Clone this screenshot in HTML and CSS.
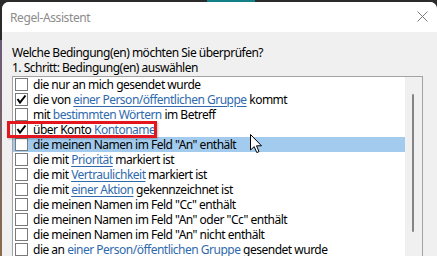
FILE: index.html
```html
<!DOCTYPE html>
<html lang="de">
<head>
<meta charset="utf-8">
<link rel="stylesheet" href="styles.css">
</head>
<body>
<div class="screen">
  <div class="desk-strip"><span class="teal"></span></div>
  <div class="window">
    <div class="titlebar">
      <span class="title">Regel-Assistent</span>
      <svg class="close" width="11" height="11" viewBox="0 0 11 11"><path d="M0.5 0.5 L10.5 10.5 M10.5 0.5 L0.5 10.5" stroke="#7a7a7a" stroke-width="1" fill="none"/></svg>
    </div>
    <div class="content">
      <p class="line">Welche Bedingung(en) möchten Sie überprüfen?</p>
      <p class="line">1. Schritt: Bedingung(en) auswählen</p>
      <div class="listbox">
        <ul class="items">
          <li class="item"><span class="cb"></span><span>die nur an mich gesendet wurde</span></li>
          <li class="item"><span class="cb"><svg width="11" height="11" viewBox="0 0 11 11"><path d="M1.5 5 L4 8.5 L9.5 1.5" stroke="#000" stroke-width="2" fill="none"/></svg></span><span>die von <a class="lnk">einer Person/öffentlichen Gruppe</a> kommt</span></li>
          <li class="item"><span class="cb"></span><span>mit <a class="lnk plain">bestimmten Wörtern</a> im Betreff</span></li>
          <li class="item"><span class="cb"><svg width="11" height="11" viewBox="0 0 11 11"><path d="M1.5 5 L4 8.5 L9.5 1.5" stroke="#000" stroke-width="2" fill="none"/></svg></span><span>über Konto <a class="lnk">Kontoname</a></span></li>
          <li class="item selected"><span class="cb"></span><span>die meinen Namen im Feld "An" enthält</span></li>
          <li class="item"><span class="cb"></span><span>die mit <a class="lnk">Priorität</a> markiert ist</span></li>
          <li class="item"><span class="cb"></span><span>die mit <a class="lnk">Vertraulichkeit</a> markiert ist</span></li>
          <li class="item"><span class="cb"></span><span>die mit <a class="lnk">einer Aktion</a> gekennzeichnet ist</span></li>
          <li class="item"><span class="cb"></span><span>die meinen Namen im Feld "Cc" enthält</span></li>
          <li class="item"><span class="cb"></span><span>die meinen Namen im Feld "An" oder "Cc" enthält</span></li>
          <li class="item"><span class="cb"></span><span>die meinen Namen im Feld "An" nicht enthält</span></li>
          <li class="item"><span class="cb"></span><span>die an <a class="lnk">einer Person/öffentlichen Gruppe</a> gesendet wurde</span></li>
        </ul>
        <div class="scrollbar"><span class="thumb"></span></div>
      </div>
    </div>
  </div>
  <div class="highlight-box"></div>
  <svg class="cursor" width="13" height="20" viewBox="0 0 13 20"><path d="M0.5 0.5 L0.5 16 L4.2 12.6 L6.8 18.6 L9 17.6 L6.5 11.8 L11.5 11.8 Z" fill="#fff" stroke="#000" stroke-width="1" stroke-linejoin="miter"/></svg>
</div>
</body>
</html>
```
FILE: styles.css
```css
* { box-sizing: border-box; }
html, body { margin: 0; padding: 0; }
body {
  width: 437px;
  height: 256px;
  overflow: hidden;
  background: #262626;
  font-family: "Noto Sans", "Open Sans", sans-serif;
}
.screen {
  position: relative;
  width: 437px;
  height: 256px;
  background: linear-gradient(to bottom, #2a2a2a 0, #2a2a2a 40px, #6b5a7a 40px, #8a6a4a 256px);
}
.desk-strip {
  height: 2px;
  position: relative;
  background: #2b2b2b;
}
.teal {
  position: absolute;
  left: 207px;
  width: 48px;
  top: 0;
  height: 2px;
  background: #137f86;
}
.window {
  margin-left: 2px;
  height: 254px;
  border-radius: 7px 7px 0 0;
  overflow: hidden;
  background: #f0f0f0;
  display: flex;
  flex-direction: column;
}
.titlebar {
  height: 30px;
  flex: none;
  background: #ffffff;
  display: flex;
  align-items: center;
  justify-content: space-between;
  padding: 0 9px 0 8px;
}
.title {
  font-size: 12px;
  color: #8c8c8c;
  letter-spacing: -0.4px;
}
.close { display: block; margin-top: -1px; }
.content {
  flex: 1;
  padding: 13px 0 0 10px;
  display: flex;
  flex-direction: column;
  min-height: 0;
}
.line {
  margin: 0;
  font-size: 12px;
  line-height: 15px;
  color: #000;
  letter-spacing: -0.5px;
}
.listbox {
  margin-top: 1px;
  width: 411px;
  flex: 1;
  border: 1px solid #a3a3a3;
  border-bottom: none;
  background: #fff;
  display: flex;
  min-height: 0;
}
.items {
  list-style: none;
  margin: 0;
  padding: 0;
  flex: 1;
}
.item {
  height: 15px;
  line-height: 15px;
  display: flex;
  align-items: center;
  font-size: 12px;
  color: #000;
  white-space: nowrap;
  letter-spacing: -0.5px;
}
.item.selected { background: #a2cbee; }
.cb {
  width: 13px;
  height: 13px;
  margin-left: 2px;
  margin-right: 5px;
  border: 1px solid #7a7a7a;
  background: #fff;
  flex: none;
  display: flex;
  align-items: center;
  justify-content: center;
}
.cb svg { display: block; }
.lnk {
  color: #2f6aad;
  text-decoration: underline;
  text-underline-offset: 2px;
  text-decoration-thickness: 1px;
}
.lnk.plain { text-decoration: none; }
.scrollbar {
  width: 17px;
  flex: none;
  background: #f0f0f0;
  position: relative;
}
.thumb {
  position: absolute;
  left: 7px;
  top: 17px;
  width: 2px;
  height: 138px;
  border-radius: 1px;
  background: #858585;
}
.highlight-box {
  position: absolute;
  left: 7px;
  top: 121px;
  width: 150px;
  height: 17px;
  border: 3px solid #e4161d;
  box-shadow: 1px 1px 2px rgba(0,0,0,0.25);
}
.cursor {
  position: absolute;
  left: 250px;
  top: 134px;
}
```
